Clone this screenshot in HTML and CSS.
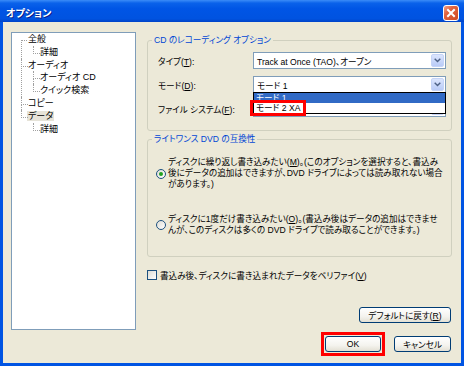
FILE: index.html
```html
<!DOCTYPE html>
<html lang="ja">
<head>
  <meta charset="UTF-8">
  <title>オプション</title>
  <link rel="stylesheet" href="styles.css">
</head>
<body>

  <div class="window">
    <div class="titlebar">
      <span class="title">オプション</span>
      <span class="close">
        <svg width="14" height="14" viewBox="0 0 14 14"><path d="M4 4 L10 10 M10 4 L4 10" stroke="#fff" stroke-width="2" stroke-linecap="square"/></svg>
      </span>
    </div>

    <div class="client">
      <ul class="tree">
        <li><span class="node">全般</span>
          <ul><li><span class="node">詳細</span></li></ul>
        </li>
        <li><span class="node">オーディオ</span>
          <ul>
            <li><span class="node">オーディオ CD</span></li>
            <li><span class="node">クイック検索</span></li>
          </ul>
        </li>
        <li><span class="node">コピー</span></li>
        <li><span class="node selected">データ</span>
          <ul><li><span class="node">詳細</span></li></ul>
        </li>
      </ul>

      <div class="panel">
        <fieldset class="group group-cd">
          <legend>CD のレコーディング オプション</legend>
          <div class="field">
            <label>タイプ(<u>T</u>):</label>
            <div class="combo">
              <span class="value">Track at Once (TAO)、オープン</span>
              <span class="arrow"><svg width="7" height="5" viewBox="0 0 7 5"><path d="M0.7 0.7 L3.5 3.5 L6.3 0.7" fill="none" stroke="#4d6185" stroke-width="1.4"/></svg></span>
            </div>
          </div>
          <div class="field">
            <label>モード(<u>D</u>):</label>
            <div class="combo">
              <span class="value">モード 1</span>
              <span class="arrow"><svg width="7" height="5" viewBox="0 0 7 5"><path d="M0.7 0.7 L3.5 3.5 L6.3 0.7" fill="none" stroke="#4d6185" stroke-width="1.4"/></svg></span>
              <ul class="droplist">
                <li class="active">モード 1</li>
                <li><span class="mark-text">モード 2 XA</span></li>
              </ul>
            </div>
          </div>
          <div class="field">
            <label>ファイル システム(<u>F</u>):</label>
            <div class="combo">
              <span class="value"></span>
              <span class="arrow"><svg width="7" height="5" viewBox="0 0 7 5"><path d="M0.7 0.7 L3.5 3.5 L6.3 0.7" fill="none" stroke="#4d6185" stroke-width="1.4"/></svg></span>
            </div>
          </div>
        </fieldset>

        <fieldset class="group group-dvd">
          <legend>ライトワンス DVD の互換性</legend>
          <div class="radio">
            <span class="dot checked"></span>
            <span class="radio-text">ディスクに繰り返し書き込みたい(<u>M</u>)。(このオプションを選択すると、書込み<br>後にデータの追加はできますが、DVD ドライブによっては読み取れない場合<br>があります。)</span>
          </div>
          <div class="radio">
            <span class="dot"></span>
            <span class="radio-text">ディスクに1度だけ書き込みたい(<u>O</u>)。(書込み後はデータの追加はできませ<br>んが、このディスクは多くの DVD ドライブで読み取ることができます。)</span>
          </div>
        </fieldset>

        <div class="check">
          <span class="box"></span>
          <span>書込み後、ディスクに書き込まれたデータをベリファイ(<u>V</u>)</span>
        </div>

        <div class="actions">
          <button class="btn btn-default">デフォルトに戻す(<u>R</u>)</button>
        </div>
        <div class="actions dialog-buttons">
          <span class="mark"><button class="btn btn-ok">OK</button></span>
          <button class="btn btn-cancel">キャンセル</button>
        </div>
      </div>
    </div>
  </div>

</body>
</html>
```

FILE: styles.css
```css
* {
  box-sizing: border-box;
}

body {
  margin: 0;
  font-family: "Liberation Sans", "Noto Sans CJK JP", sans-serif;
  font-size: 8.6px;
  font-feature-settings: "palt";
  color: #000;
}

u {
  text-underline-offset: 1px;
}

.window {
  width: 464px;
  height: 366px;
  display: flex;
  flex-direction: column;
  background: #0054e3;
}

.titlebar {
  height: 22px;
  flex-shrink: 0;
  display: flex;
  align-items: center;
  justify-content: space-between;
  padding: 3px 5px 0 6px;
  background: linear-gradient(#3b8cf8 0%, #0a62ea 14%, #0055e5 40%, #0053e0 85%, #0043c8 100%);
}

.title {
  color: #fff;
  font-family: "Noto Sans CJK JP", sans-serif;
  font-weight: bold;
  font-size: 10px;
  text-shadow: 1px 1px #0a1e8a;
}

.close {
  width: 16px;
  height: 16px;
  display: flex;
  align-items: center;
  justify-content: center;
  border: 1px solid #fff;
  border-radius: 3px;
  background: linear-gradient(135deg, #f0a08a 0%, #e2643f 35%, #cf4a22 100%);
}

.client {
  flex: 1;
  margin: 0 3px 3px;
  background: #ece9d8;
  display: flex;
  gap: 11px;
  padding: 10px 9px 11px 8px;
}

/* ツリー */
.tree {
  width: 125px;
  height: 298px;
  flex-shrink: 0;
  margin: 0;
  padding: 0;
  list-style: none;
  background: #fff;
  border: 1px solid #7f9db9;
  font-size: 9px;
}

.tree ul {
  list-style: none;
  margin: 0 0 0 -4px;
  padding: 0;
}

.tree li {
  position: relative;
  padding-left: 16px;
  line-height: 12.8px;
}

.tree li::before {
  content: "";
  position: absolute;
  left: 9px;
  top: 0;
  width: 6px;
  height: 7px;
  border-left: 1px dotted #a0a0a0;
  border-bottom: 1px dotted #a0a0a0;
}

.tree li::after {
  content: "";
  position: absolute;
  left: 9px;
  top: 7px;
  bottom: 0;
  border-left: 1px dotted #a0a0a0;
}

.tree li:last-child::after {
  display: none;
}

.tree > li:first-child::before {
  border-left: 0;
}

.node {
  padding: 0 1px;
  margin-left: -1px;
}

.node.selected {
  background: #e6e3d8;
}

/* 右側 */
.panel {
  width: 305px;
  min-width: 0;
  display: flex;
  flex-direction: column;
}

.group {
  margin: 0;
  border: 1px solid #d0d0bf;
  border-radius: 3px;
  min-width: 0;
}

.group legend {
  color: #0046d5;
  padding: 0 2px;
  line-height: 12px;
}

.group-cd {
  margin-top: 2px;
  padding: 6px 5px 13px 4px;
}

.field {
  display: flex;
  align-items: center;
  height: 17px;
  padding-left: 6px;
}

.field + .field {
  margin-top: 7px;
}

.field label {
  flex: 1;
}

.combo {
  position: relative;
  width: 193px;
  height: 17px;
  display: flex;
  align-items: center;
  padding-left: 3px;
  background: #fff;
  border: 1px solid #7f9db9;
}

.combo .value {
  flex: 1;
  white-space: nowrap;
}

.arrow {
  width: 13px;
  height: 13px;
  margin-right: 1px;
  display: flex;
  align-items: center;
  justify-content: center;
  border: 1px solid #c5d4f7;
  border-radius: 2px;
  background: linear-gradient(#dbe5fd, #b9cbf7);
}

.droplist {
  position: absolute;
  left: -1px;
  right: -1px;
  top: 15px;
  z-index: 2;
  margin: 0;
  padding: 0;
  list-style: none;
  background: #fff;
  border: 1px solid #000;
}

.droplist li {
  height: 10px;
  line-height: 10px;
  padding-left: 2px;
  white-space: nowrap;
}

.droplist li.active {
  background: #316ac5;
  color: #fff;
}

.mark-text {
  display: inline-block;
  height: 10px;
  padding: 0 3px;
  margin-left: -3px;
  outline: 3px solid #ff0000;
}

.group-dvd {
  margin-top: 2px;
  padding: 12px 5px 20px 4px;
}

.radio {
  display: flex;
  align-items: center;
  gap: 2px;
  padding-left: 4px;
}

.radio + .radio {
  margin-top: 24px;
}

.radio-text {
  line-height: 11px;
  white-space: nowrap;
}

.dot {
  width: 10px;
  height: 10px;
  flex-shrink: 0;
  display: flex;
  align-items: center;
  justify-content: center;
  border: 1px solid #1c5180;
  border-radius: 50%;
  background: linear-gradient(135deg, #dcdcd4, #fff);
}

.dot.checked::after {
  content: "";
  width: 4px;
  height: 4px;
  border-radius: 50%;
  background: #21a121;
}

.check {
  display: flex;
  align-items: center;
  gap: 3px;
  margin-top: 12px;
}

.check .box {
  width: 10px;
  height: 10px;
  border: 1px solid #1c5180;
  background: linear-gradient(135deg, #dcdcd4, #fff);
}

.actions {
  display: flex;
  justify-content: flex-end;
  gap: 13px;
  padding-right: 1px;
  margin-top: auto;
}

.dialog-buttons {
  margin-top: 13px;
}

.btn {
  height: 16px;
  padding: 0;
  font: inherit;
  color: #000;
  border: 1px solid #003c74;
  border-radius: 3px;
  background: linear-gradient(#ffffff 0%, #f4f3ee 60%, #e3e0d4 100%);
}

.btn-default {
  width: 92px;
}

.btn-ok {
  width: 56px;
}

.btn-cancel {
  width: 57px;
}

.mark {
  display: flex;
  margin: -4px;
  padding: 1px;
  border: 3px solid #ff0000;
}
```
